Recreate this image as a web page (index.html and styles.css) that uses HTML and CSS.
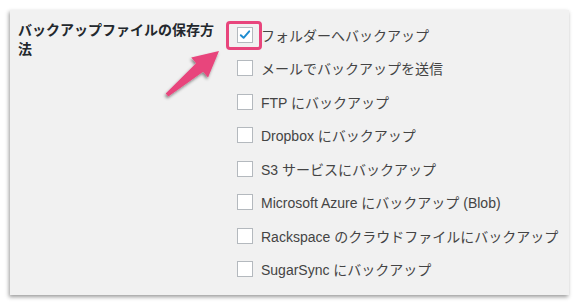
FILE: index.html
```html
<!DOCTYPE html>
<html lang="ja">

<head>
    <meta charset="UTF-8" />
    <meta name="viewport" content="width=device-width, initial-scale=1" />
    <title>バックアップ設定</title>
    <link rel="stylesheet" href="styles.css">
</head>

<body>
    <div class="panel">
        <div class="field-label">バックアップファイルの保存方法</div>

        <div class="options">
            <label class="option">
                <span class="check checked">
                    <svg viewBox="0 0 16 16" width="14" height="14">
                        <path d="M3.2 8.2 L6.4 11.2 L12.8 3.8" fill="none" stroke="#1e8cd0" stroke-width="2.2"
                            stroke-linecap="round" stroke-linejoin="round" />
                    </svg>
                    <span class="highlight"></span>
                </span>
                フォルダーへバックアップ
            </label>
            <label class="option"><span class="check"></span>メールでバックアップを送信</label>
            <label class="option"><span class="check"></span>FTP にバックアップ</label>
            <label class="option"><span class="check"></span>Dropbox にバックアップ</label>
            <label class="option"><span class="check"></span>S3 サービスにバックアップ</label>
            <label class="option"><span class="check"></span>Microsoft Azure にバックアップ (Blob)</label>
            <label class="option"><span class="check"></span>Rackspace のクラウドファイルにバックアップ</label>
            <label class="option"><span class="check"></span>SugarSync にバックアップ</label>
        </div>

        <!-- pointer arrow drawn over the panel -->
        <svg class="pointer" width="579" height="305" viewBox="0 0 579 305">
            <defs>
                <filter id="arrow-shadow" x="-20%" y="-20%" width="140%" height="140%">
                    <feDropShadow dx="-1" dy="2" stdDeviation="1.6" flood-color="#000" flood-opacity="0.45" />
                </filter>
            </defs>
            <polygon filter="url(#arrow-shadow)" fill="#e8457c"
                points="165.7,93.5 196.1,63.3 191.2,57.6 219,51 208,77.4 203.1,71.7 168.3,96.5" />
        </svg>
    </div>
</body>

</html>
```

FILE: styles.css
```css
body {
    margin: 0;
    background-color: #ffffff;
    font-family: 'Liberation Sans', 'Noto Sans CJK JP', sans-serif;
    color: #444444;
}

.panel {
    position: relative;
    margin: 10px;
    width: 559px;
    height: 285px;
    background-color: #f1f1f1;
    box-shadow: -1px 2px 4px rgba(0, 0, 0, 0.4);
    display: flex;
}

.field-label {
    width: 200px;
    padding: 11px 0 0 8px;
    font-size: 14px;
    line-height: 19px;
    font-weight: bold;
    color: #23282d;
}

.options {
    display: flex;
    flex-direction: column;
    padding: 8px 0 0 19px;
}

.option {
    display: flex;
    align-items: center;
    gap: 8px;
    height: 33.5px;
    font-size: 14px;
    white-space: nowrap;
}

.check {
    position: relative;
    width: 16px;
    height: 16px;
    box-sizing: border-box;
    border: 1px solid #b4b9be;
    background-color: #ffffff;
    display: flex;
    align-items: center;
    justify-content: center;
    flex-shrink: 0;
}

.highlight {
    position: absolute;
    left: -12px;
    top: -7px;
    width: 36px;
    height: 29px;
    box-sizing: border-box;
    border: 3px solid #e8457c;
    border-radius: 4px;
}

.pointer {
    position: absolute;
    left: -10px;
    top: -10px;
    pointer-events: none;
}
```
